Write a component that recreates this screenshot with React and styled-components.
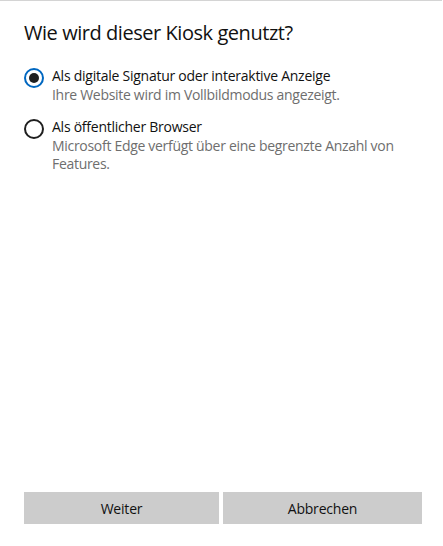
import React, { useState } from "react"
import styled, { createGlobalStyle } from "styled-components"

const GlobalStyle = createGlobalStyle`
  html, body {
    margin: 0;
    padding: 0;
    background: #ffffff;
  }
  body {
    font-family: "Open Sans", "Noto Sans", "Liberation Sans", sans-serif;
  }
`

const options = [
  {
    id: "signage",
    label: "Als digitale Signatur oder interaktive Anzeige",
    hint: "Ihre Website wird im Vollbildmodus angezeigt.",
  },
  {
    id: "browser",
    label: "Als öffentlicher Browser",
    hint: "Microsoft Edge verfügt über eine begrenzte Anzahl von Features.",
  },
]

const App = () => {
  const [selected, setSelected] = useState("signage")

  return (
    <>
      <GlobalStyle />
      <Dialog>
        <Title>Wie wird dieser Kiosk genutzt?</Title>
        <OptionList>
          {options.map(item => (
            <Option key={item.id} onClick={() => setSelected(item.id)}>
              <Radio checked={selected === item.id} />
              <OptionText>
                <Label>{item.label}</Label>
                <Hint>{item.hint}</Hint>
              </OptionText>
            </Option>
          ))}
        </OptionList>
        <Footer>
          <Button wide={195}>Weiter</Button>
          <Button wide={199}>Abbrechen</Button>
        </Footer>
      </Dialog>
    </>
  )
}

const Dialog = styled.div`
  display: flex;
  flex-direction: column;
  box-sizing: border-box;
  height: 546px;
  width: 442px;
  border-top: 1px solid #d4d4d4;
  padding: 0 20px 22px 24px;
  color: #000000;
`

const Title = styled.h1`
  margin: 18px 0 0;
  font-size: 20px;
  font-weight: 400;
  line-height: 28px;
  letter-spacing: -0.45px;
  color: #111111;
`

const OptionList = styled.div`
  display: flex;
  flex-direction: column;
  gap: 13px;
  margin-top: 19px;
`

const Option = styled.div`
  display: flex;
  align-items: flex-start;
  gap: 8px;
  cursor: pointer;
`

const Radio = styled.span`
  flex: none;
  box-sizing: border-box;
  width: 20px;
  height: 20px;
  margin-top: 2px;
  border-radius: 50%;
  border: 2px solid ${p => (p.checked ? "#0067c0" : "#1f1f1f")};
  display: flex;
  align-items: center;
  justify-content: center;
  &::after {
    content: "";
    width: 10px;
    height: 10px;
    border-radius: 50%;
    background: #1f1f1f;
    display: ${p => (p.checked ? "block" : "none")};
  }
`

const OptionText = styled.div`
  display: flex;
  flex-direction: column;
`

const Label = styled.div`
  font-size: 14px;
  line-height: 20px;
  letter-spacing: -0.25px;
  color: #111111;
`

const Hint = styled.div`
  font-size: 14px;
  line-height: 18px;
  color: #6e6e6e;
  letter-spacing: -0.3px;
`

const Footer = styled.div`
  margin-top: auto;
  display: flex;
  gap: 4px;
`

const Button = styled.button`
  width: ${p => p.wide}px;
  height: 32px;
  border: none;
  background: #cccccc;
  color: #111111;
  font-family: inherit;
  font-size: 14px;
  letter-spacing: -0.2px;
  padding: 0;
`

export default App
